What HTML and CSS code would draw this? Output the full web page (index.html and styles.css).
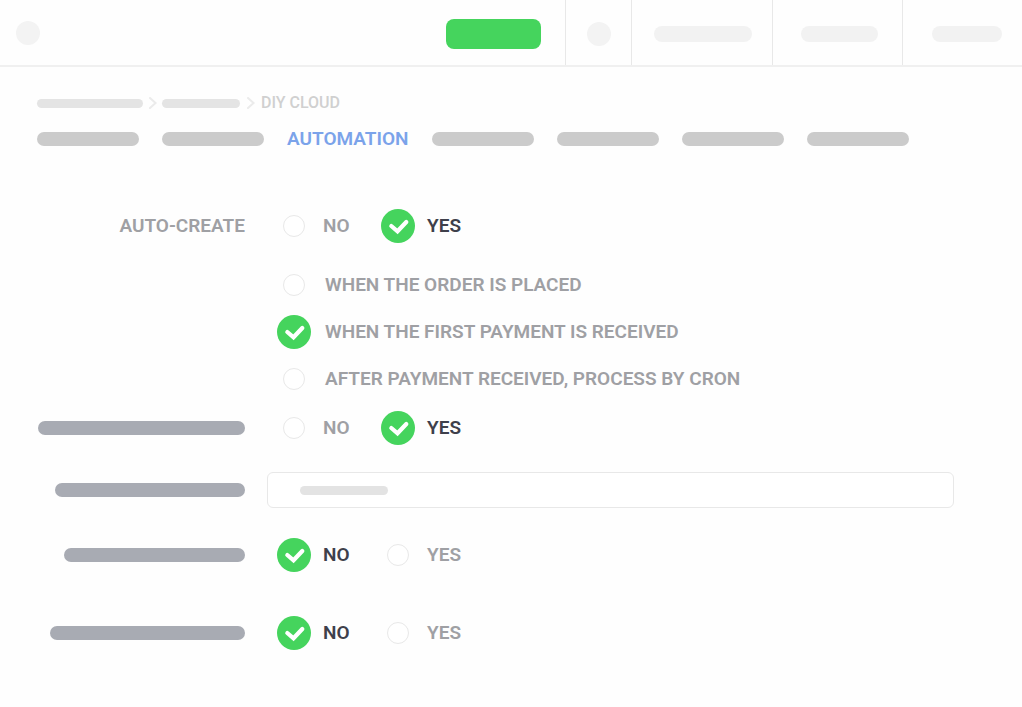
FILE: index.html
```
<!DOCTYPE html>
<html lang="en">
<head>
<meta charset="utf-8">
<meta name="viewport" content="width=device-width, initial-scale=1">
<title>DIY Cloud – Automation</title>
<link rel="stylesheet" href="styles.css">
</head>
<body>
<svg width="0" height="0" class="defs" aria-hidden="true">
  <symbol id="check" viewBox="0 0 34 34">
    <circle cx="17" cy="17" r="17" fill="#45d45d"/>
    <path d="M10.300 17L16.500 22.300L25.300 13" fill="none" stroke="#fff" stroke-width="4.200" stroke-linecap="round" stroke-linejoin="miter"/>
  </symbol>
  <symbol id="chevron" viewBox="0 0 8 12">
    <path d="M1 1l5.500 5L1 11" fill="none" stroke="#ebebeb" stroke-width="2" stroke-linecap="round"/>
  </symbol>
</svg>

<header class="topbar">
  <span class="dot topbar-logo"></span>
  <button class="topbar-action" type="button" aria-label="Save"></button>
  <div class="cell cell-icon"><span class="dot"></span></div>
  <div class="cell cell-wide"><span class="pill pill-l"></span></div>
  <div class="cell cell-mid"><span class="pill pill-m"></span></div>
  <div class="cell cell-end"><span class="pill pill-s"></span></div>
</header>

<main class="page">
  <nav class="crumbs" aria-label="Breadcrumb">
    <span class="crumb-bar crumb-l"></span>
    <svg class="chevron" aria-hidden="true"><use href="#chevron"/></svg>
    <span class="crumb-bar crumb-s"></span>
    <svg class="chevron" aria-hidden="true"><use href="#chevron"/></svg>
    <a class="crumb" href="#">DIY CLOUD</a>
  </nav>

  <nav class="tabs" aria-label="Sections">
    <span class="tab-bar"></span>
    <span class="tab-bar"></span>
    <a class="tab" href="#" aria-current="page">AUTOMATION</a>
    <span class="tab-bar"></span>
    <span class="tab-bar"></span>
    <span class="tab-bar"></span>
    <span class="tab-bar"></span>
  </nav>

  <form class="form">
    <div class="row" role="radiogroup" aria-labelledby="auto">
      <span class="row-label" id="auto">AUTO-CREATE</span>
      <div class="choices">
        <label class="option"><span class="mark"><input type="radio" name="auto"><svg><use href="#check"/></svg></span><span class="text">NO</span></label>
        <label class="option"><span class="mark"><input type="radio" name="auto" checked><svg><use href="#check"/></svg></span><span class="text">YES</span></label>
      </div>
    </div>

    <div class="row row-list" role="radiogroup">
      <div class="list">
        <label class="option"><span class="mark"><input type="radio" name="when"><svg><use href="#check"/></svg></span><span class="text">WHEN THE ORDER IS PLACED</span></label>
        <label class="option"><span class="mark"><input type="radio" name="when" checked><svg><use href="#check"/></svg></span><span class="text">WHEN THE FIRST PAYMENT IS RECEIVED</span></label>
        <label class="option"><span class="mark"><input type="radio" name="when"><svg><use href="#check"/></svg></span><span class="text">AFTER PAYMENT RECEIVED, PROCESS BY CRON</span></label>
      </div>
    </div>

    <div class="row row-second" role="radiogroup">
      <span class="label-bar label-a"></span>
      <div class="choices">
        <label class="option"><span class="mark"><input type="radio" name="second"><svg><use href="#check"/></svg></span><span class="text">NO</span></label>
        <label class="option"><span class="mark"><input type="radio" name="second" checked><svg><use href="#check"/></svg></span><span class="text">YES</span></label>
      </div>
    </div>

    <div class="row row-field">
      <span class="label-bar label-b"></span>
      <label class="field"><input type="text" aria-label="Value"><span class="field-bar"></span></label>
    </div>

    <div class="row row-third" role="radiogroup">
      <span class="label-bar label-c"></span>
      <div class="choices">
        <label class="option"><span class="mark"><input type="radio" name="third" checked><svg><use href="#check"/></svg></span><span class="text">NO</span></label>
        <label class="option"><span class="mark"><input type="radio" name="third"><svg><use href="#check"/></svg></span><span class="text">YES</span></label>
      </div>
    </div>

    <div class="row row-fourth" role="radiogroup">
      <span class="label-bar label-d"></span>
      <div class="choices">
        <label class="option"><span class="mark"><input type="radio" name="fourth" checked><svg><use href="#check"/></svg></span><span class="text">NO</span></label>
        <label class="option"><span class="mark"><input type="radio" name="fourth"><svg><use href="#check"/></svg></span><span class="text">YES</span></label>
      </div>
    </div>
  </form>
</main>
</body>
</html>
```
FILE: styles.css
```
* { box-sizing: border-box; }

body {
  margin: 0;
  background: #fefefe;
  color: #9fa0a4;
  font: 600 19px/24px Roboto, "Liberation Sans", sans-serif;
}

a { color: inherit; text-decoration: none; }
.defs { position: absolute; }

/* Top bar */
.topbar {
  display: flex;
  align-items: stretch;
  height: 67px;
  border-bottom: 2px solid #f0f0f0;
}
.dot {
  width: 24px;
  height: 24px;
  border-radius: 50%;
  background: #f3f3f3;
}
.topbar-logo { margin: auto auto auto 16px; }
.topbar-action {
  align-self: center;
  width: 95px;
  height: 30px;
  margin-right: 24px;
  margin-top: 2px;
  border: 0;
  border-radius: 8px;
  background: #45d45d;
}
.cell {
  display: flex;
  align-items: center;
  justify-content: center;
  border-left: 1px solid #e8e8e8;
  padding-top: 2px;
}
.cell-icon { width: 66px; }
.cell-wide { width: 141px; padding-left: 2px; }
.cell-mid { width: 130px; padding-left: 3px; }
.cell-end { width: 120px; padding-left: 9px; }
.pill { height: 16px; border-radius: 8px; background: #f2f2f2; }
.pill-l { width: 98px; }
.pill-m { width: 77px; }
.pill-s { width: 70px; }

/* Page */
.page { padding: 26px 68px 40px 37px; }
.crumbs {
  display: flex;
  align-items: center;
  font-size: 16px;
  font-weight: 500;
  line-height: 20px;
  color: #d0d0d0;
}
.crumb-bar { height: 9px; border-radius: 5px; background: #e4e4e4; }
.crumb-l { width: 106px; }
.crumb-s { width: 78px; }
.chevron { width: 8px; height: 12px; margin: 0 6px; }
.crumb-bar + .chevron { margin-right: 5px; }
.crumb-s + .chevron { margin: 0 6px 0 7px; }

.tabs {
  display: flex;
  align-items: center;
  gap: 23px;
  margin-top: 14px;
}
.tab-bar { width: 102px; height: 14px; border-radius: 7px; background: #cbcbcb; }
.tab { color: #7ba3ea; }

/* Form */
.form { margin-top: 58px; }
.row {
  display: grid;
  grid-template-columns: 208px minmax(0, 1fr);
  column-gap: 22px;
  align-items: center;
}
.row-list { margin-top: 25px; }
.row-second { margin-top: 15px; }
.row-field { margin-top: 27px; }
.row-third { margin-top: 30px; }
.row-fourth { margin-top: 44px; }
.row-label { text-align: right; }
.label-bar {
  justify-self: end;
  height: 14px;
  border-radius: 7px;
  background: #a8abb3;
}
.label-a { width: 207px; }
.label-b { width: 190px; }
.label-c { width: 181px; }
.label-d { width: 195px; }

.choices {
  display: grid;
  grid-template-columns: 104px max-content;
  padding-left: 10px;
}
.list {
  display: grid;
  grid-column: 2;
  justify-items: start;
  row-gap: 13px;
  padding-left: 10px;
}
.option { display: flex; align-items: center; gap: 12px; }
.list .option { gap: 14px; }
.mark { display: grid; place-items: center; width: 34px; height: 34px; }
.mark input,
.mark svg { grid-area: 1 / 1; }
.mark input {
  appearance: none;
  width: 22px;
  height: 22px;
  margin: 0;
  border: 1px solid #e8e8e8;
  border-radius: 50%;
  background: #fff;
}
.mark svg { width: 34px; height: 34px; visibility: hidden; }
.mark input:checked + svg { visibility: visible; }
.choices .option:has(:checked) { color: #3e404b; }

.field { display: grid; align-items: center; }
.field input,
.field-bar { grid-area: 1 / 1; }
.field input {
  width: 100%;
  height: 36px;
  padding: 0 33px;
  border: 1px solid #e8e8e8;
  border-radius: 6px;
  background: #fff;
  font: inherit;
}
.field-bar {
  width: 88px;
  height: 9px;
  margin-left: 33px;
  border-radius: 5px;
  background: #e3e3e3;
}
```
